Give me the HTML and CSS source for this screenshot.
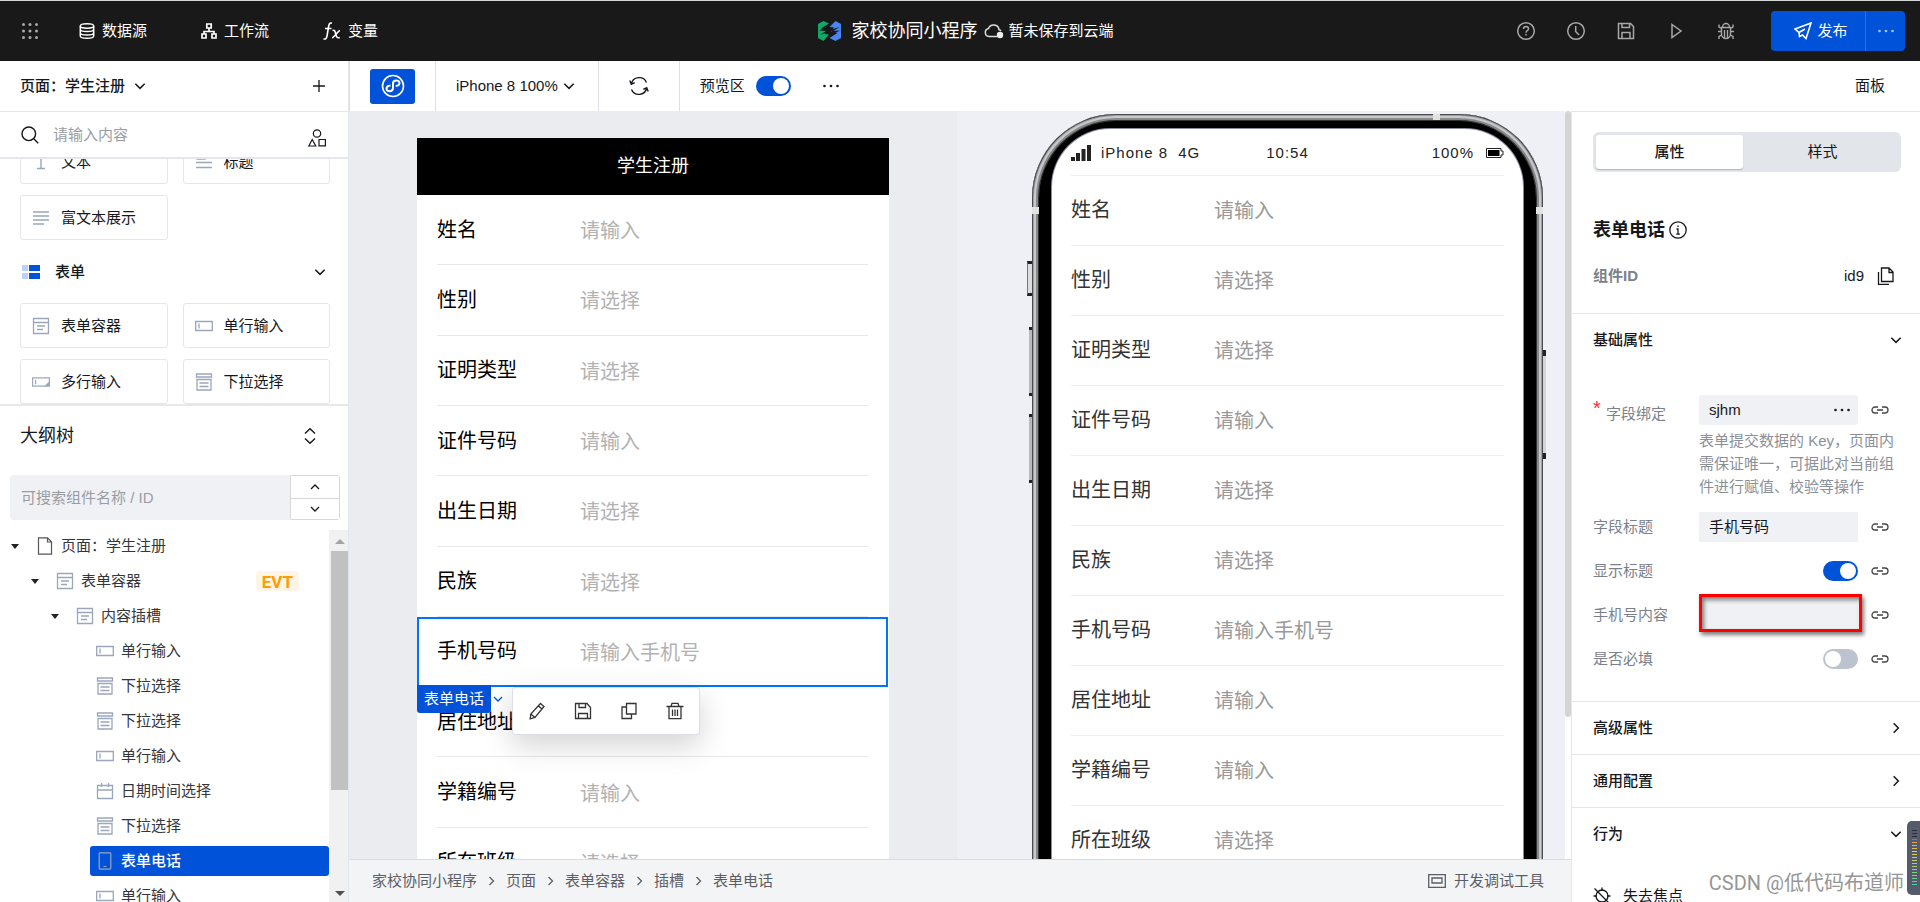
FILE: index.html
```html
<!DOCTYPE html>
<html lang="zh-CN">
<head>
<meta charset="utf-8">
<title>家校协同小程序</title>
<link rel="stylesheet" href="styles.css">
</head>
<body>
<svg class="sprite" aria-hidden="true">
  <symbol id="i-down" viewBox="0 0 12 12"><path d="M2 4l4 4 4-4" fill="none" stroke="currentColor" stroke-width="1.3"/></symbol>
  <symbol id="i-up" viewBox="0 0 12 12"><path d="M2 8l4-4 4 4" fill="none" stroke="currentColor" stroke-width="1.3"/></symbol>
  <symbol id="i-right" viewBox="0 0 12 12"><path d="M4 2l4 4-4 4" fill="none" stroke="currentColor" stroke-width="1.3"/></symbol>
  <symbol id="i-dots" viewBox="0 0 18 4"><g fill="currentColor"><circle cx="2.5" cy="2" r="1.3"/><circle cx="9" cy="2" r="1.3"/><circle cx="15.500" cy="2" r="1.3"/></g></symbol>
  <symbol id="i-link" viewBox="0 0 18 10"><path d="M7 2H4a3 3 0 0 0 0 6h3M11 2h3a3 3 0 0 1 0 6h-3M6 5h6" fill="none" stroke="currentColor" stroke-width="1.300"/></symbol>
  <symbol id="i-container" viewBox="0 0 18 18"><path d="M1.500 1.500h15v15h-15zM1.500 5.500h15M5 9h8M5 12.500h6" fill="none" stroke="currentColor" stroke-width="1.300"/></symbol>
  <symbol id="i-input" viewBox="0 0 18 18"><path d="M.7 4.500h16.600v9H.7zM4 6.500v5" fill="none" stroke="currentColor" stroke-width="1.300"/></symbol>
  <symbol id="i-area" viewBox="0 0 20 18"><path d="M.7 4.500h18.600v9H.7zM4 6.500v5" fill="none" stroke="currentColor" stroke-width="1.300"/><path d="M19 8.500v5h-5z" fill="currentColor"/></symbol>
  <symbol id="i-select" viewBox="0 0 18 18"><path d="M1.500 1h15v3h-15zM2 6.500h14v10.500H2zM4.500 10h9M4.500 13.500h9" fill="none" stroke="currentColor" stroke-width="1.300"/></symbol>
  <symbol id="i-date" viewBox="0 0 18 18"><path d="M1.500 3.500h15v13h-15zM1.500 8h15M5.500 1v4M12.500 1v4" fill="none" stroke="currentColor" stroke-width="1.300"/></symbol>
  <symbol id="i-phone" viewBox="0 0 18 18"><path d="M4 .9h10a.8.8 0 0 1 .8.8v14.600a.8.8 0 0 1-.8.8H4a.8.8 0 0 1-.8-.8V1.700A.8.8 0 0 1 4 .9zM7.500 14.500h3" fill="none" stroke="currentColor" stroke-width="1.200"/></symbol>
  <symbol id="i-para" viewBox="0 0 18 18"><path d="M1 3h16M1 7h16M1 11h16M1 15h11" fill="none" stroke="currentColor" stroke-width="1.300"/></symbol>
  <symbol id="i-text" viewBox="0 0 18 18"><path d="M2 5V2h14v3M9 2v13M5 15.500h8" fill="none" stroke="currentColor" stroke-width="1.400"/></symbol>
  <symbol id="i-title" viewBox="0 0 18 18"><path d="M2 1h8v5H2zM1 9.500h16M1 14.500h16" fill="none" stroke="currentColor" stroke-width="1.300"/></symbol>
  <symbol id="i-file" viewBox="0 0 16 18"><path d="M1.500.8h9l4 4v12.400h-13zM10.500.8v4.200h4" fill="none" stroke="currentColor" stroke-width="1.200"/></symbol>
  <symbol id="i-save" viewBox="0 0 18 18"><path d="M1.500 1.500h11.500l3.500 4v11h-15zM5 1.500v4h6.500v-4M4.500 16.500v-5h9v5" fill="none" stroke="currentColor" stroke-width="1.300"/></symbol>
</svg>

<header class="topbar">
  <nav class="topnav" aria-label="主导航">
    <button class="ghost apps" aria-label="应用"><svg width="18" height="18" viewBox="0 0 18 18" fill="currentColor"><g id="dotrow"><circle cx="2.500" cy="2.500" r="1.500"/><circle cx="9" cy="2.500" r="1.500"/><circle cx="15.500" cy="2.500" r="1.500"/></g><use href="#dotrow" y="6.500"/><use href="#dotrow" y="13"/></svg></button>
    <a href="#data"><svg width="16" height="16" viewBox="0 0 16 16" fill="none" stroke="currentColor" stroke-width="1.500"><ellipse cx="8" cy="3" rx="6.700" ry="2.200"/><path d="M1.300 3v10c0 3 13.400 3 13.400 0V3M1.300 6.300c0 3 13.400 3 13.400 0M1.300 9.700c0 3 13.400 3 13.400 0"/></svg>数据源</a>
    <a href="#flow"><svg width="16" height="16" viewBox="0 0 16 16" fill="none" stroke="currentColor" stroke-width="1.700"><path d="M5.800 1h4.400v4H5.800zM1 11h4v4H1zM11 11h4v4h-4zM8 5v3.500M3 11V8.500h10V11"/></svg>工作流</a>
    <a href="#vars"><svg width="18" height="18" viewBox="0 0 18 18" fill="none" stroke="currentColor" stroke-width="1.600"><path d="M9 1.200C6.500.5 6 2 5.600 4.500L4 14c-.4 2.500-1.500 3.500-3.500 2.800M2 6.500h6.500M9.500 8.500c2-.8 2.500.5 3.200 3.500s1.500 4.500 4 3.500M17 8.500c-2 .3-5.500 7-8 7.200"/></svg>变量</a>
  </nav>
  <div class="project">
    <svg width="23" height="20" viewBox="0 0 23 20"><path d="M5.500 0L11 2.500 3 7.500 9.500 9 6.500 13 11 13.500 5.500 20 0 17V3z" fill="#12a86a"/><path d="M17.500 0L23 3v14l-5.500 3-6-3 8-5-6.500-1.500 3-4-4.500-.5z" fill="#4a86ee"/><path d="M1 9.500L12 5l-3 4 2.500 1.500L2 14l6-4z" fill="#191919"/><path d="M22 9.500L11 15l3-4.500L12 9l9.500-3-6 4z" fill="#191919"/></svg>
    <h1>家校协同小程序</h1>
    <svg class="cloud" width="20" height="16" viewBox="0 0 20 16"><path d="M13 13.500H5a4 4 0 0 1-.5-7.900 5.500 5.500 0 0 1 10.600 1.200 3 3 0 0 1 1.900 1.200" fill="none" stroke="#ddd" stroke-width="1.500"/><circle cx="16" cy="12" r="3.200" fill="#eee"/></svg>
    <span>暂未保存到云端</span>
  </div>
  <div class="actions">
    <button class="ghost" aria-label="帮助"><svg width="20" height="20" viewBox="0 0 20 20" fill="none" stroke="currentColor" stroke-width="1.500"><circle cx="10" cy="10" r="8.300"/><path d="M7.500 8c0-3.500 5-3.200 5-.3 0 1.800-2.500 1.800-2.500 4M10 13v1.600"/></svg></button>
    <button class="ghost" aria-label="历史"><svg width="20" height="20" viewBox="0 0 20 20" fill="none" stroke="currentColor" stroke-width="1.500"><circle cx="10" cy="10" r="8.300"/><path d="M9.700 5v5.500l3.300 3.500"/></svg></button>
    <button class="ghost" aria-label="保存"><svg width="20" height="20" viewBox="0 0 20 20" fill="none" stroke="currentColor" stroke-width="1.500"><path d="M2.500 2.500h12l3 3v12h-15zM6 2.500v4h7.500v-4M6 17.500v-6h8v6"/></svg></button>
    <button class="ghost" aria-label="运行"><svg width="20" height="20" viewBox="0 0 20 20" fill="none" stroke="currentColor" stroke-width="1.500"><path d="M6 3.500l9 6.500-9 6.500z"/></svg></button>
    <button class="ghost" aria-label="调试"><svg width="20" height="20" viewBox="0 0 20 20" fill="none" stroke="currentColor" stroke-width="1.400"><path d="M6.500 6.500a3.500 4 0 0 1 7 0M5.500 6.500h9V13a4.500 4.500 0 0 1-9 0zM8.500 9v8M11.500 9v8M5.500 10.500H2M14.500 10.500H18M5.500 7.500L3 6V3.500M14.500 7.500L17 6V3.500M5.500 14L3 15.500V18M14.500 14l2.500 1.500V18"/></svg></button>
    <div class="publish">
      <button class="pub-main"><svg width="18" height="18" viewBox="0 0 18 18" fill="none" stroke="currentColor" stroke-width="1.600"><path d="M17 1L1 7l4 3.500.5 4L8.500 13l3.500 3.500zM5 10.500L11 7"/></svg>发布</button>
      <button class="pub-more" aria-label="更多发布"><svg width="18" height="4"><use href="#i-dots"/></svg></button>
    </div>
  </div>
</header>

<div class="shell">
  <aside class="left">
    <div class="pagebar">
      <button class="plain strong">页面：学生注册<svg width="14" height="14"><use href="#i-down"/></svg></button>
      <button class="plain" aria-label="新建页面"><svg width="12" height="12" viewBox="0 0 12 12"><path d="M6 0v12M0 6h12" stroke="currentColor" stroke-width="1.300"/></svg></button>
    </div>
    <div class="finder">
      <svg width="18" height="18" viewBox="0 0 18 18" fill="none" stroke="currentColor" stroke-width="1.400"><circle cx="7.800" cy="7.800" r="6.800"/><path d="M12.800 12.800l4.400 4.400"/></svg>
      <input type="text" placeholder="请输入内容" aria-label="搜索组件">
      <button class="plain shapes" aria-label="组件分类"><svg width="18" height="18" viewBox="0 0 18 18" fill="none" stroke="currentColor" stroke-width="1.200"><circle cx="9" cy="4.500" r="3.700"/><path d="M4.200 10.500l3.600 6.500H.8zM11 10.500h6.400v6.400H11z"/></svg></button>
    </div>
    <div class="palette">
      <div class="widgets first">
        <button><svg width="18" height="18"><use href="#i-text"/></svg>文本</button>
        <button><svg width="18" height="18"><use href="#i-title"/></svg>标题</button>
        <button><svg width="18" height="18"><use href="#i-para"/></svg>富文本展示</button>
      </div>
      <button class="plain group"><svg width="18" height="14" viewBox="0 0 18 14"><path d="M0 0h6v6H0zM0 8h6v6H0z" fill="#bcd2fb"/><path d="M7 0h11v6H7zM7 8h11v6H7z" fill="#0052d9"/></svg><span>表单</span><svg width="14" height="14"><use href="#i-down"/></svg></button>
      <div class="widgets">
        <button><svg width="18" height="18"><use href="#i-container"/></svg>表单容器</button>
        <button><svg width="18" height="18"><use href="#i-input"/></svg>单行输入</button>
        <button><svg width="18" height="18"><use href="#i-area"/></svg>多行输入</button>
        <button><svg width="18" height="18"><use href="#i-select"/></svg>下拉选择</button>
      </div>
    </div>
    <section class="outline">
      <header class="outline-head"><h2>大纲树</h2><button class="plain" aria-label="收起"><svg width="14" height="18" viewBox="0 0 14 18" fill="none" stroke="currentColor" stroke-width="1.400"><path d="M2 6.500L7 1.700l5 4.800M2 11.500l5 4.800 5-4.800"/></svg></button></header>
      <div class="tree-search">
        <input type="text" placeholder="可搜索组件名称 / ID" aria-label="搜索大纲">
        <div class="stepper"><button aria-label="上一个"><svg width="12" height="12"><use href="#i-up"/></svg></button><button aria-label="下一个"><svg width="12" height="12"><use href="#i-down"/></svg></button></div>
      </div>
      <div class="tree-wrap">
        <ul class="tree">
          <li class="l0"><i class="caret"></i><svg class="dark" width="18" height="18"><use href="#i-file"/></svg>页面：学生注册</li>
          <li class="l1"><i class="caret"></i><svg width="18" height="18"><use href="#i-container"/></svg>表单容器<b class="evt">EVT</b></li>
          <li class="l2"><i class="caret"></i><svg width="18" height="18"><use href="#i-container"/></svg>内容插槽</li>
          <li class="l3"><svg width="18" height="18"><use href="#i-input"/></svg>单行输入</li>
          <li class="l3"><svg width="18" height="18"><use href="#i-select"/></svg>下拉选择</li>
          <li class="l3"><svg width="18" height="18"><use href="#i-select"/></svg>下拉选择</li>
          <li class="l3"><svg width="18" height="18"><use href="#i-input"/></svg>单行输入</li>
          <li class="l3"><svg width="18" height="18"><use href="#i-date"/></svg>日期时间选择</li>
          <li class="l3"><svg width="18" height="18"><use href="#i-select"/></svg>下拉选择</li>
          <li class="l3 current"><svg width="18" height="18"><use href="#i-phone"/></svg>表单电话</li>
          <li class="l3"><svg width="18" height="18"><use href="#i-input"/></svg>单行输入</li>
        </ul>
        <div class="scroll" aria-hidden="true"><i class="tri up"></i><i class="thumb"></i><i class="tri"></i></div>
      </div>
    </section>
  </aside>

  <main class="main">
    <div class="toolbar">
      <div class="cell"><button class="mini" aria-label="小程序"><svg width="24" height="24" viewBox="0 0 24 24" fill="none" stroke="currentColor" stroke-width="1.600"><circle cx="12" cy="12" r="10.500"/><path d="M9.500 11.500c-2.500.3-4 1.500-4 3.200 0 3.300 6.500 3.600 6.500-.7V9.500c0-4.300 6.500-3.800 6.500-.6 0 1.700-1.500 2.800-3.800 3.100" stroke-width="2"/></svg></button></div>
      <div class="cell"><button class="plain device">iPhone 8 100%<svg width="14" height="14"><use href="#i-down"/></svg></button></div>
      <div class="cell refresh"><button class="plain" aria-label="刷新"><svg width="20" height="20" viewBox="0 0 20 20" fill="none" stroke="currentColor" stroke-width="1.400"><path d="M2.300 8A8 8 0 0 1 17.500 6.500M17.700 12A8 8 0 0 1 2.500 13.500M.8 4.500L2.300 8.200l3.400-1.600M19.200 15.500l-1.500-3.700-3.400 1.600"/></svg></button></div>
      <div class="cell last"><label for="sw-preview">预览区</label><input class="switch" type="checkbox" id="sw-preview" checked><button class="plain more" aria-label="更多"><svg width="18" height="4"><use href="#i-dots"/></svg></button></div>
      <a class="panel-link" href="#panel">面板</a>
    </div>
    <div class="body">
      <div class="center">
        <div class="stage">
          <section class="canvas">
            <div class="page">
              <h2 class="page-title">学生注册</h2>
              <form class="form edit">
                <div class="row"><label for="a1">姓名</label><input id="a1" type="text" placeholder="请输入"></div>
                <div class="row"><label for="a2">性别</label><select id="a2"><option>请选择</option></select></div>
                <div class="row"><label for="a3">证明类型</label><select id="a3"><option>请选择</option></select></div>
                <div class="row"><label for="a4">证件号码</label><input id="a4" type="text" placeholder="请输入"></div>
                <div class="row"><label for="a5">出生日期</label><select id="a5"><option>请选择</option></select></div>
                <div class="row"><label for="a6">民族</label><select id="a6"><option>请选择</option></select></div>
                <div class="row picked"><label for="a7">手机号码</label><input id="a7" type="text" placeholder="请输入手机号">
                  <div class="pick">
                    <span class="tag">表单电话</span>
                    <button type="button" class="plain tag-more" aria-label="选择父级"><svg width="12" height="12"><use href="#i-down"/></svg></button>
                    <div class="tools">
                      <button type="button" class="plain" aria-label="编辑"><svg width="18" height="18" viewBox="0 0 18 18" fill="none" stroke="currentColor" stroke-width="1.300"><path d="M12.500 1.500l3.500 3-9 11-4.800 1.300.6-4.800zM2.800 12l4.200 3.500M10.500 4l3.500 3"/></svg></button>
                      <button type="button" class="plain" aria-label="存为区块"><svg width="18" height="18"><use href="#i-save"/></svg></button>
                      <button type="button" class="plain" aria-label="复制"><svg width="18" height="18" viewBox="0 0 18 18" fill="none" stroke="currentColor" stroke-width="1.300"><path d="M6.500 1.500h9.500v10.500H6.500zM6.500 5H2v11.500h9.500V12"/></svg></button>
                      <button type="button" class="plain" aria-label="删除"><svg width="18" height="18" viewBox="0 0 18 18" fill="none" stroke="currentColor" stroke-width="1.300"><path d="M.5 4.500h17M5 4.500l1-3.200h6l1 3.200M3 4.500v12.200h12V4.500M6.500 7.500v6.500M9 7.500v6.500M11.500 7.500v6.500"/></svg></button>
                    </div>
                  </div>
                </div>
                <div class="row"><label for="a8">居住地址</label><input id="a8" type="text"></div>
                <div class="row"><label for="a9">学籍编号</label><input id="a9" type="text" placeholder="请输入"></div>
                <div class="row"><label for="a10">所在班级</label><select id="a10"><option>请选择</option></select></div>
              </form>
            </div>
          </section>
          <section class="preview">
            <div class="phone">
              <i class="band top"></i><i class="band lt"></i><i class="band rt"></i>
              <i class="key k1"></i><i class="key k2"></i><i class="key k3"></i><i class="key k4"></i>
              <div class="bezel"><div class="screen">
                <div class="status">
                  <span class="carrier"><svg width="20" height="16" viewBox="0 0 20 16" fill="#222"><path d="M0 12h4v4H0zM5 8h4v8H5zM10.500 4h4v12h-4zM16 0h4v16h-4z"/></svg><span>iPhone 8</span><span>4G</span></span>
                  <time>10:54</time>
                  <span class="power">100%<svg width="18" height="10" viewBox="0 0 18 10"><path d="M.5.5h14.500v2.500h2v4h-2v2.500H.5z" fill="none" stroke="#222"/><path d="M2 2h11.500v6H2z"/></svg></span>
                </div>
                <form class="form live">
                  <div class="row"><label for="b1">姓名</label><input id="b1" type="text" placeholder="请输入"></div>
                  <div class="row"><label for="b2">性别</label><select id="b2"><option>请选择</option></select></div>
                  <div class="row"><label for="b3">证明类型</label><select id="b3"><option>请选择</option></select></div>
                  <div class="row"><label for="b4">证件号码</label><input id="b4" type="text" placeholder="请输入"></div>
                  <div class="row"><label for="b5">出生日期</label><select id="b5"><option>请选择</option></select></div>
                  <div class="row"><label for="b6">民族</label><select id="b6"><option>请选择</option></select></div>
                  <div class="row"><label for="b7">手机号码</label><input id="b7" type="text" placeholder="请输入手机号"></div>
                  <div class="row"><label for="b8">居住地址</label><input id="b8" type="text" placeholder="请输入"></div>
                  <div class="row"><label for="b9">学籍编号</label><input id="b9" type="text" placeholder="请输入"></div>
                  <div class="row"><label for="b10">所在班级</label><select id="b10"><option>请选择</option></select></div>
                </form>
              </div></div>
            </div>
          </section>
          <div class="stage-scroll" aria-hidden="true"><i></i></div>
        </div>
        <footer class="crumbs">
          <nav aria-label="路径"><a href="#p0">家校协同小程序</a><svg width="12" height="12"><use href="#i-right"/></svg><a href="#p1">页面</a><svg width="12" height="12"><use href="#i-right"/></svg><a href="#p2">表单容器</a><svg width="12" height="12"><use href="#i-right"/></svg><a href="#p3">插槽</a><svg width="12" height="12"><use href="#i-right"/></svg><a href="#p4">表单电话</a></nav>
          <button class="plain dev"><svg width="18" height="14" viewBox="0 0 18 14" fill="none" stroke="currentColor" stroke-width="1.300"><path d="M.7.700h16.600v12.600H.7zM4 4h10v5H4z"/></svg>开发调试工具</button>
        </footer>
      </div>

      <aside class="props" id="panel">
        <div class="intro">
          <div class="tabs" role="tablist"><button role="tab" aria-selected="true" class="on">属性</button><button role="tab" aria-selected="false">样式</button></div>
          <h2>表单电话<svg width="18" height="18" viewBox="0 0 18 18" fill="none" stroke="currentColor" stroke-width="1.300"><circle cx="9" cy="9" r="8.200"/><path d="M7.500 8H9v5M7.300 13.200h3.600M9 4.500v1.600"/></svg></h2>
          <div class="idrow"><span class="key-name">组件ID</span><span>id9</span><button class="plain" aria-label="复制ID"><svg width="18" height="18" viewBox="0 0 18 18" fill="none" stroke="currentColor" stroke-width="1.300"><path d="M4.500 1h7.500l4 4v9.500H4.500zM12 1v4.500h4M1.500 5v12.300h10.500"/></svg></button></div>
        </div>
        <section class="sect">
          <button class="plain sect-head">基础属性<svg width="14" height="14"><use href="#i-down"/></svg></button>
          <div class="fields">
            <div class="field"><label class="req" for="f1">字段绑定</label><div class="box"><input id="f1" type="text" value="sjhm"><button class="plain" aria-label="选择字段"><svg width="18" height="4"><use href="#i-dots"/></svg></button></div><button class="plain link" aria-label="绑定"><svg width="18" height="10"><use href="#i-link"/></svg></button>
              <p>表单提交数据的 Key，页面内需保证唯一，可据此对当前组件进行赋值、校验等操作</p></div>
            <div class="field"><label for="f2">字段标题</label><div class="box sq"><input id="f2" type="text" value="手机号码"></div><button class="plain link" aria-label="绑定"><svg width="18" height="10"><use href="#i-link"/></svg></button></div>
            <div class="field"><label for="f3">显示标题</label><input class="switch" type="checkbox" id="f3" checked><button class="plain link" aria-label="绑定"><svg width="18" height="10"><use href="#i-link"/></svg></button></div>
            <div class="field"><label for="f4">手机号内容</label><div class="box marked"><input id="f4" type="text"></div><button class="plain link" aria-label="绑定"><svg width="18" height="10"><use href="#i-link"/></svg></button></div>
            <div class="field"><label for="f5">是否必填</label><input class="switch" type="checkbox" id="f5"><button class="plain link" aria-label="绑定"><svg width="18" height="10"><use href="#i-link"/></svg></button></div>
          </div>
        </section>
        <section class="sect"><button class="plain sect-head">高级属性<svg width="14" height="14"><use href="#i-right"/></svg></button></section>
        <section class="sect"><button class="plain sect-head">通用配置<svg width="14" height="14"><use href="#i-right"/></svg></button></section>
        <section class="sect"><button class="plain sect-head">行为<svg width="14" height="14"><use href="#i-down"/></svg></button>
          <div class="event"><svg width="18" height="18" viewBox="0 0 18 18" fill="none" stroke="currentColor" stroke-width="1.300"><circle cx="9" cy="9" r="6"/><path d="M1.500 1.500l15 15M9 .5V4M9 14v3.500M.5 9H4M14 9h3.500"/></svg>失去焦点</div>
        </section>
        <span class="mark">CSDN @低代码布道师</span>
        <div class="meter" aria-hidden="true"><i></i></div>
      </aside>
    </div>
  </main>
</div>
</body>
</html>
```
FILE: styles.css
```css
:root {
  --blue: #0052d9;
  --ink: #16181c;
  --line: #e3e6eb;
  --grey: #7b818c;
}
* { box-sizing: border-box; }
body {
  margin: 0;
  height: 100vh;
  display: flex;
  flex-direction: column;
  overflow: hidden;
  background: #fff;
  color: var(--ink);
  font: 15px/22px "Liberation Sans", "Noto Sans CJK SC", sans-serif;
}
button, input, select { font: inherit; color: inherit; margin: 0; }
button { cursor: pointer; }
h1, h2, p, ul { margin: 0; padding: 0; font: inherit; }
svg { flex: none; display: block; }
a { color: inherit; text-decoration: none; }
input, select { appearance: none; border: 0; background: none; padding: 0; outline: 0; min-width: 0; border-radius: 0; }
.sprite { position: absolute; width: 0; height: 0; }
.plain, .ghost { background: none; border: 0; padding: 0; display: flex; align-items: center; }
.strong { font-weight: 500; }

/* top bar */
.topbar {
  flex: none;
  height: 61px;
  border-top: 1px solid #d5dad8;
  background: #191919;
  color: #fff;
  display: grid;
  grid-template-columns: 1fr auto 1fr;
  align-items: center;
}
.topnav { display: flex; align-items: center; padding-left: 21px; }
.topnav a { display: flex; align-items: center; gap: 7px; margin-right: 54px; }
.ghost { color: #a8a8a8; }
.apps { margin-right: 40px; }
.project { display: flex; align-items: center; margin-left: 12px; }
.project h1 { font-size: 18px; margin: 0 7px 0 10px; }
.cloud { margin-right: 4px; }
.actions { display: flex; align-items: center; justify-content: flex-end; gap: 30px; padding-right: 15px; }
.publish { display: flex; height: 40px; margin-left: 5px; border-radius: 4px; overflow: hidden; }
.publish button { border: 0; background: var(--blue); color: #fff; display: flex; align-items: center; justify-content: center; gap: 5px; padding: 0; }
.publish .pub-main { width: 94px; padding-left: 6px; }
.publish .pub-more { width: 40px; border-left: 1px solid #2a6fe3; color: #a9c5f5; }

.shell { flex: 1; min-height: 0; display: grid; grid-template-columns: 349px 1fr; }

/* left column */
.left { display: flex; flex-direction: column; min-height: 0; border-right: 1px solid var(--line); }
.pagebar { flex: none; height: 51px; padding: 0 23px 0 20px; display: flex; align-items: center; justify-content: space-between; border-bottom: 1px solid var(--line); }
.pagebar .strong { gap: 8px; }
.finder { flex: none; height: 47px; display: flex; align-items: center; padding: 0 22px 0 21px; gap: 14px; border-bottom: 2px solid var(--line); }
.finder input { flex: 1; }
.shapes { align-self: flex-end; padding-bottom: 10px; }
::placeholder { color: #999ca3; opacity: 1; }
.palette { flex: 246 1 0; min-height: 0; overflow: hidden; padding: 0 18px 0 20px; }
.widgets { display: grid; grid-template-columns: 1fr 1fr; gap: 11px 15px; }
.widgets.first { margin-top: -20px; }
.widgets button { height: 45px; display: flex; align-items: center; gap: 11px; padding: 0 11px; border: 1px solid var(--line); border-radius: 3px; background: #fff; }
.widgets svg, .tree svg { color: #9aa6bc; }
.group { width: 100%; height: 63px; padding: 0 3px 0 2px; font-weight: 500; gap: 15px; }
.group span { flex: 1; text-align: left; }
.outline { flex: 497 1 0; min-height: 0; display: flex; flex-direction: column; border-top: 2px solid #e8e8e8; }
.outline-head { flex: none; height: 60px; display: flex; align-items: center; justify-content: space-between; padding: 0 31px 0 20px; }
.outline-head h2 { font-size: 18px; }
.tree-search { flex: none; display: flex; height: 45px; margin: 9px 8px 10px 10px; }
.tree-search input { flex: 1; background: #f0f1f5; padding: 0 11px; border-radius: 4px 0 0 4px; }
.stepper { width: 50px; display: grid; grid-template-rows: 1fr 1fr; border: 1px solid #d8d8d8; border-radius: 0 3px 3px 0; }
.stepper button { border: 0; background: #fff; display: grid; place-items: center; padding: 0; }
.stepper button + button { border-top: 1px solid #d8d8d8; }
.tree-wrap { flex: 1; min-height: 0; display: flex; overflow: hidden; }
.tree { flex: 1; list-style: none; padding-top: 1px; display: flex; flex-direction: column; gap: 5px; }
.tree li { flex: none; height: 30px; display: flex; align-items: center; gap: 7px; border-radius: 3px; color: #33363b; }
.tree .dark { color: #555; }
.tree .l0 { padding-left: 11px; }
.tree .l1 { padding-left: 31px; }
.tree .l2 { padding-left: 51px; }
.tree .l3 { padding-left: 6px; margin-left: 90px; }
.caret { border: 4px solid transparent; border-top: 5px solid #222; border-bottom: 0; margin-right: 10px; }
.current { background: var(--blue); }
.tree .current { color: #fff; font-weight: 500; }
.evt { margin: 0 30px 0 auto; padding: 0 6px; height: 20px; border-radius: 4px; background: #fff5e6; color: #ff9d00; font: 700 17px/22px Roboto, sans-serif; }
.scroll { width: 19px; background: #f1f1f1; display: flex; flex-direction: column; align-items: center; padding: 9px 0 6px 2px; }
.tri { border: 5px solid transparent; border-top-color: #505050; border-bottom: 0; margin-top: auto; }
.tri.up { border-top: 0; border-bottom: 5px solid #a3a3a3; margin: 0 0 7px; }
.thumb { width: 100%; height: 67%; background: #c1c1c1; }

/* toolbar */
.main { display: flex; flex-direction: column; min-width: 0; min-height: 0; }
.toolbar { flex: none; height: 50px; display: flex; align-items: center; border-left: 1px solid #dcdfe6; }
.cell { height: 100%; padding: 0 20px; display: flex; align-items: center; border-right: 1px solid #dcdfe6; }
.cell.last { border: 0; gap: 11px; }
.refresh { padding: 0 30px; }
.device { gap: 4px; padding-right: 2px; }
.mini { width: 45px; height: 35px; padding: 0; border: 0; border-radius: 3px; background: var(--blue); color: #fff; display: grid; place-items: center; }
.more { margin-left: 20px; }
.panel-link { margin: 0 35px 0 auto; }
.switch { flex: none; width: 35px; height: 20px; border-radius: 10px; background: #bcc3cf; display: flex; align-items: center; padding: 2px; cursor: pointer; }
.switch::before { content: ""; width: 16px; height: 16px; border-radius: 50%; background: #fff; }
.switch:checked { background: var(--blue); justify-content: flex-end; }

.body { flex: 1; min-height: 0; display: grid; grid-template-columns: 1fr 349px; }
.center { display: flex; flex-direction: column; min-width: 0; min-height: 0; }
.stage { flex: 1; min-height: 0; display: grid; grid-template-columns: 1fr 1fr 6px; }
.canvas { background: #ebecf0; padding: 27px 68px 0; overflow: hidden; min-height: 0; }
.page { background: #fff; min-height: 100%; }
.page-title { height: 57px; background: #000; color: #fff; font-size: 18px; line-height: 57px; text-align: center; }
.form { display: grid; font-size: 20px; line-height: 30px; }
.form .row { display: grid; grid-template-columns: 143px minmax(0, 1fr); align-items: center; }
.edit { grid-auto-rows: 1fr; min-height: 703px; padding: 0 21px 0 20px; color: #000; }
.edit .row { border-bottom: 1px solid #e8e8e8; position: relative; }
.form .row input, .form .row select { margin-top: 3px; }
.edit select, .edit ::placeholder { color: #b2b2b2; }
.pick { position: absolute; inset: 0 -20px -1px; z-index: 2; border: 2px solid #0073ff; }
.tag { position: absolute; top: 100%; left: -2px; height: 28px; padding: 0 7px; border-radius: 0 0 3px 3px; background: var(--blue); color: #fff; font-size: 15px; line-height: 28px; white-space: nowrap; }
.tag-more { position: absolute; top: calc(100% + 8px); left: 73px; color: var(--blue); }
.tools { position: absolute; top: calc(100% + 2px); left: 93px; height: 48px; padding: 0 15px; display: flex; gap: 28px; border: 1px solid #dcdfe6; border-radius: 3px; background: #fff; box-shadow: 0 10px 30px rgba(0, 0, 0, .18); color: #333; }

/* phone */
.preview { background: #eff0f5; padding: 3px 22px 0 75px; overflow: hidden; min-height: 0; }
.phone {
  position: relative;
  height: 1000px;
  padding: 7px;
  border-radius: 84px;
  background: #8c8c8e;
  box-shadow: inset 0 0 0 1px #4a4b50, inset 0 0 0 2px #a0a1a3, inset 0 0 0 4px #c9c9ca, inset 0 0 0 6px #88898b, inset 0 0 0 7px #333;
}
.bezel { height: 100%; padding: 8px 13px; border-radius: 77px; background: #000; }
.screen { height: 100%; padding: 0 19px; border-radius: 58px; background: #fff; box-shadow: 0 0 0 1px #8a8ba5; }
.status { height: 46px; display: grid; grid-template-columns: 1fr auto 1fr; align-items: center; padding-top: 2px; letter-spacing: 1px; color: #222; }
.carrier { display: flex; align-items: center; gap: 10px; }
.power { display: flex; align-items: center; justify-content: flex-end; gap: 12px; }
.live { color: #333; grid-auto-rows: 70px; }
.live .row { border-top: 1px solid #f0f0f0; padding-bottom: 2px; }
.live select, .live ::placeholder { color: #999; }
.band { position: absolute; background: #e2e3e0; }
.band.top { top: 0; right: 103px; width: 7px; height: 6px; }
.band.lt { top: 93px; left: 0; width: 7px; height: 7px; }
.band.rt { top: 93px; right: 0; width: 7px; height: 7px; }
.key { position: absolute; left: -3px; width: 3px; height: 69px; border: solid #222; border-width: 3px 0; background: #b9babd; }
.k1 { top: 147px; height: 35px; width: 5px; left: -5px; border-left: 1px solid #777; background: #dddde0; }
.k2 { top: 213px; }
.k3 { top: 300px; }
.k4 { top: 236px; height: 109px; left: auto; right: -3px; border-width: 6px 0; background: #d6d6da; }
.stage-scroll { background: #fff; }
.stage-scroll i { display: block; height: 81%; border-radius: 3px; background: #d4d4d4; }

.crumbs { flex: none; height: 43px; padding: 0 27px 0 23px; display: flex; align-items: center; justify-content: space-between; border-top: 1px solid #d7dbe2; background: #f3f4f6; color: #5a5e66; }
.crumbs nav { display: flex; align-items: center; gap: 8px; }
.crumbs nav svg { width: 13px; }
.dev { gap: 8px; }

/* properties */
.props { position: relative; min-height: 0; overflow: hidden; border-left: 1px solid var(--line); background: #fff; border-top: 1px solid var(--line); }
.intro { padding: 20px 19px 0 21px; height: 201px; }
.tabs { display: grid; grid-template-columns: 1fr 1fr; height: 40px; padding: 3px; border-radius: 6px; background: #e2e6eb; }
.tabs button { border: 0; border-radius: 3px; background: none; padding: 0; }
.tabs .on { background: #fff; font-weight: 500; margin-right: 4px; box-shadow: 0 1px 1px #aab4c4; }
.intro h2 { margin-top: 43px; height: 30px; display: flex; align-items: center; gap: 4px; font-size: 18px; font-weight: 700; }
.idrow { margin-top: 16px; height: 30px; padding-right: 6px; display: flex; align-items: center; gap: 13px; }
.key-name { margin-right: auto; color: var(--grey); font-weight: 700; }
.sect { border-top: 1px solid var(--line); }
.sect-head { width: 100%; height: 52px; padding: 0 17px 0 21px; justify-content: space-between; font-weight: 500; }
.fields { padding: 29px 24px 27px 21px; display: grid; grid-template-columns: minmax(0, 1fr); gap: 14px; }
.field { display: grid; grid-template-columns: 106px minmax(0, 1fr) 38px; align-items: center; min-height: 30px; }
.field label { color: var(--grey); }
.field .switch { justify-self: end; }
.field p { grid-column: 2 / 4; margin-top: 4px; line-height: 23px; color: #8b8f98; }
.req { padding-top: 7px; }
.req::before { content: "*"; display: inline-block; width: 13px; color: #f33; font-size: 20px; line-height: 10px; vertical-align: 4px; }
.box { position: relative; height: 30px; display: flex; align-items: center; padding: 0 7px 0 10px; background: #f0f1f5; border-radius: 3px; }
.box.sq { border-radius: 0; }
.box input { flex: 1; }
.marked::after { content: ""; position: absolute; inset: -6px -4px -2px 0; border: 3px solid #f00; box-shadow: 2px 3px 4px rgba(0, 0, 0, .5), inset 2px 3px 4px rgba(0, 0, 0, .5); pointer-events: none; }
.link { margin-left: 13px; color: #444; }
.event { height: 30px; margin: 21px 0 0 21px; display: flex; align-items: center; gap: 12px; }
.mark { position: absolute; right: 16px; bottom: 4px; font: 20px/30px Roboto, "Noto Sans CJK SC", sans-serif; color: #969696; }
.meter { position: absolute; right: 0; bottom: 7px; width: 13px; height: 74px; padding: 9px 3px 8px 5px; border-radius: 5px 0 0 5px; background: #565b6b; }
.meter i { display: block; height: 100%; background: repeating-linear-gradient(transparent 0 1px, #565b6b 1px 3px), linear-gradient(#2c2f38 16%, #f0915a 17%, #e5cf55 40%, #8fd47c 70%, #3fd0a0); }
```
